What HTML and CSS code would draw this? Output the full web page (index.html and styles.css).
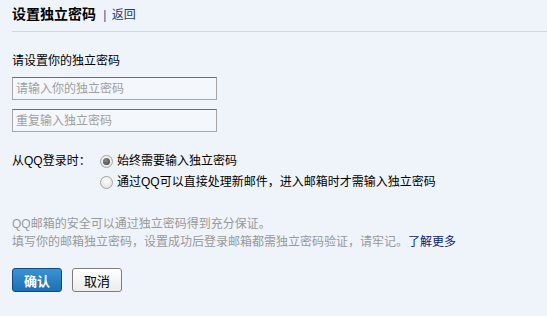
FILE: index.html
```html
<!DOCTYPE html>
<html lang="zh-CN">
<head>
  <meta charset="UTF-8">
  <title>设置独立密码</title>
  <link rel="stylesheet" href="styles.css">
</head>
<body>
  <!-- Kopfzeile -->
  <div class="header">
    <span class="title">设置独立密码</span>
    <span class="sep">|</span>
    <a class="back" href="#">返回</a>
  </div>

  <div class="content">
    <div class="label">请设置你的独立密码</div>
    <input class="pwd" type="password" placeholder="请输入你的独立密码">
    <input class="pwd" type="password" placeholder="重复输入独立密码">

    <!-- Optionen -->
    <div class="options">
      <div class="opt-label">从QQ登录时：</div>
      <div class="opt-list">
        <label class="radio"><input type="radio" name="mode" checked> 始终需要输入独立密码</label>
        <label class="radio"><input type="radio" name="mode"> 通过QQ可以直接处理新邮件，进入邮箱时才需输入独立密码</label>
      </div>
    </div>

    <div class="tips">
      <div>QQ邮箱的安全可以通过独立密码得到充分保证。</div>
      <div>填写你的邮箱独立密码，设置成功后登录邮箱都需独立密码验证，请牢记。<a class="more" href="#">了解更多</a></div>
    </div>

    <div class="buttons">
      <button class="btn btn-ok">确认</button>
      <button class="btn btn-cancel">取消</button>
    </div>
  </div>
</body>
</html>
```

FILE: styles.css
```css
* {
  box-sizing: border-box;
}

body {
  margin: 0;
  background: #eff4fb;
  font-family: "Liberation Sans", "Noto Sans CJK SC", sans-serif;
  font-size: 12px;
  color: #000;
}

a {
  text-decoration: none;
}

/* Kopfzeile */
.header {
  margin-left: 12px;
  height: 32px;
  padding-top: 5px;
  border-bottom: 1px solid #d4d7dc;
  line-height: 18px;
}

.title {
  font-size: 14px;
  font-weight: bold;
}

.sep {
  color: #1e5494;
  margin: 0 2px 0 4px;
}

.back {
  color: #1e3a6e;
}

/* Inhalt */
.content {
  padding-left: 12px;
}

.label {
  margin-top: 21px;
  line-height: 16px;
}

.pwd {
  display: block;
  width: 205px;
  height: 23px;
  margin-top: 8px;
  padding: 0 3px;
  border: 1px solid #a6a6a6;
  border-top-color: #6e6e6e;
  background: #f4f7fb;
  font-family: inherit;
  font-size: 12px;
}

.pwd + .pwd {
  margin-top: 9px;
}

.pwd::placeholder {
  color: #a0a0a0;
}

.options {
  display: flex;
  margin-top: 19px;
  line-height: 21px;
}

.opt-label {
  width: 87px;
}

.radio {
  display: flex;
  align-items: center;
}

/* Radio-Knopf */
.radio input {
  appearance: none;
  -webkit-appearance: none;
  margin: 0 4px 0 1px;
  width: 13px;
  height: 13px;
  border: 1px solid #a4a4a4;
  border-radius: 50%;
  background: radial-gradient(circle at 50% 35%, #ffffff, #dcdcdc);
  position: relative;
}

.radio input:checked::after {
  content: "";
  position: absolute;
  top: 2px;
  left: 2px;
  width: 7px;
  height: 7px;
  border-radius: 50%;
  background: radial-gradient(circle at 40% 35%, #8a8a8a, #3a3a3a);
}

.tips {
  margin-top: 22px;
  color: #999;
  line-height: 18px;
}

.more {
  color: #0a1c6e;
}

.buttons {
  display: flex;
  gap: 10px;
  margin-top: 17px;
}

.btn {
  width: 50px;
  height: 24px;
  border-radius: 3px;
  font-family: inherit;
  font-size: 13px;
  padding: 0;
}

.btn-ok {
  color: #fff;
  font-weight: bold;
  border: 1px solid #0d4983;
  background: linear-gradient(#3a93d4, #1e6fb4);
}

.btn-cancel {
  color: #000;
  border: 1px solid #7d7d7d;
  background: linear-gradient(#fff, #ececec);
}
```
